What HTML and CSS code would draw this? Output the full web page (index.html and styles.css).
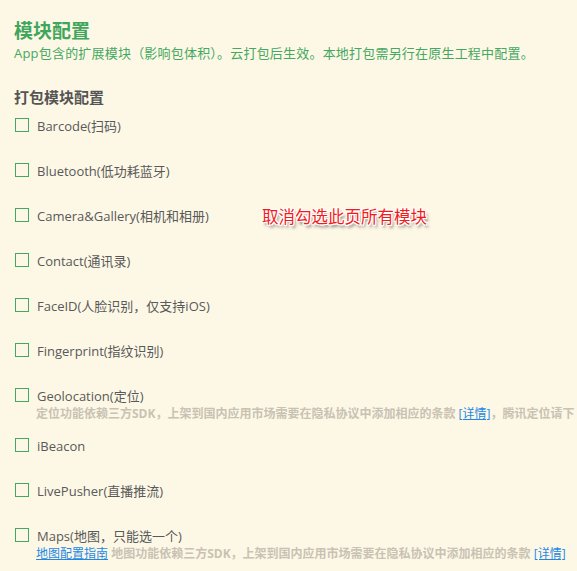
FILE: index.html
```html
<!DOCTYPE html>
<html lang="zh-CN">
<head>
    <meta charset="UTF-8">
    <meta name="viewport" content="width=device-width, initial-scale=1.0">
    <title>模块配置</title>
    <link rel="stylesheet" href="styles.css">
</head>
<body>
    <section class="page">
        <h1 class="title">模块配置</h1>
        <p class="subtitle">App包含的扩展模块（影响包体积）。云打包后生效。本地打包需另行在原生工程中配置。</p>

        <h2 class="group-title">打包模块配置</h2>
        <ul class="modules">
            <li class="module"><label><span class="box"></span>Barcode(扫码)</label></li>
            <li class="module"><label><span class="box"></span>Bluetooth(低功耗蓝牙)</label></li>
            <li class="module"><label><span class="box"></span>Camera&amp;Gallery(相机和相册)</label></li>
            <li class="module"><label><span class="box"></span>Contact(通讯录)</label></li>
            <li class="module"><label><span class="box"></span>FaceID(人脸识别，仅支持iOS)</label></li>
            <li class="module"><label><span class="box"></span>Fingerprint(指纹识别)</label></li>
            <li class="module">
                <label><span class="box"></span>Geolocation(定位)</label>
                <div class="desc">定位功能依赖三方SDK，上架到国内应用市场需要在隐私协议中添加相应的条款 <a href="#">[详情]</a>，腾讯定位请下</div>
            </li>
            <li class="module"><label><span class="box"></span>iBeacon</label></li>
            <li class="module"><label><span class="box"></span>LivePusher(直播推流)</label></li>
            <li class="module">
                <label><span class="box"></span>Maps(地图，只能选一个)</label>
                <div class="desc"><a href="#" class="guide">地图配置指南</a> 地图功能依赖三方SDK，上架到国内应用市场需要在隐私协议中添加相应的条款 <a href="#">[详情]</a></div>
            </li>
        </ul>

        <div class="hint">取消勾选此页所有模块</div>
    </section>
</body>
</html>
```

FILE: styles.css
```css
html, body {
    margin: 0;
    padding: 0;
    background-color: #fdf8e6;
    overflow: hidden;
}
body {
    font-family: 'Open Sans', 'Noto Sans CJK SC', sans-serif;
    color: #555;
}
.page {
    position: relative;
    padding: 18px 0 0 14px;
    white-space: nowrap;
}
.title {
    margin: 0;
    font-size: 19px;
    line-height: 26px;
    font-weight: 700;
    color: #3fa65c;
}
.subtitle {
    margin: 0;
    font-size: 13px;
    line-height: 18px;
    letter-spacing: 0.2px;
    color: #45a862;
}
.group-title {
    margin: 25px 0 0;
    font-size: 15px;
    line-height: 20px;
    font-weight: 700;
    color: #555;
}
.modules {
    list-style: none;
    margin: 9px 0 0;
    padding: 0;
}
.module {
    min-height: 30px;
    padding-bottom: 15px;
}
.module label {
    display: flex;
    align-items: center;
    font-size: 13px;
    line-height: 20px;
    color: #595959;
}
.box {
    width: 12px;
    height: 12px;
    margin: -3px 8px 0 1px;
    border: 1px solid #45a862;
}
.desc {
    padding-left: 22px;
    font-size: 12px;
    line-height: 15px;
    font-weight: 700;
    color: #c9c2b3;
}
.desc a {
    color: #1e88e5;
    font-weight: 400;
    text-decoration: underline;
}
.hint {
    position: absolute;
    left: 262px;
    top: 206px;
    font-size: 16.5px;
    line-height: 20px;
    font-family: 'Noto Sans CJK SC', sans-serif;
    color: #f31a1a;
    text-shadow: -1px 0 #fff, 1px 0 #fff, 0 -1px #fff, 0 1px #fff,
        -1px -1px #fff, 1px 1px #fff, -1px 1px #fff, 1px -1px #fff,
        2px 3px 3px rgba(0, 0, 0, 0.55);
}
```
